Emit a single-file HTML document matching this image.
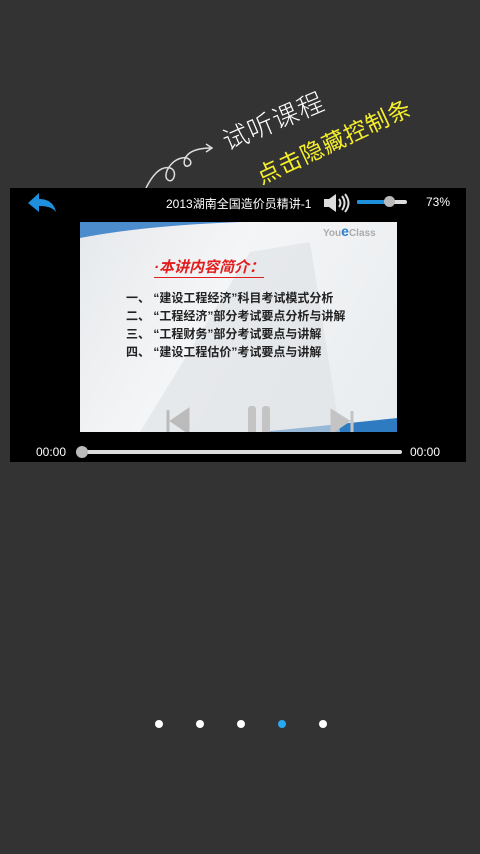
<!DOCTYPE html><html><head><meta charset="utf-8"><style>
body{margin:0;width:480px;height:854px;background:#333333;position:relative;overflow:hidden;font-family:"Liberation Sans","Noto Sans CJK SC",sans-serif}
.a{position:absolute}
</style></head><body>
<div class="a" style="left:216px;top:124px;color:#fff;font-size:26px;transform:rotate(-23deg);transform-origin:left top;font-family:'WenQuanYi Zen Hei','Noto Sans CJK SC',sans-serif;letter-spacing:1px;font-weight:300">试听课程</div>
<div class="a" style="left:250px;top:160px;color:#f4ee2c;font-size:23px;transform:rotate(-25deg);transform-origin:left top;font-family:'WenQuanYi Zen Hei','Noto Sans CJK SC',sans-serif;letter-spacing:1px">点击隐藏控制条</div>
<svg class="a" style="left:140px;top:138px" width="80" height="52"><path d="M6 50 C14 34 22 28 30 30 C38 32 34 46 28 42 C22 38 30 22 42 20 C50 18 54 26 48 28 C42 30 42 16 56 12 C62 10 68 10 72 10 M66 6 L72 10 L66 14" fill="none" stroke="#ddd" stroke-width="1.5"/></svg>
<div class="a" style="left:10px;top:188px;width:456px;height:274px;background:#000"></div>
<svg class="a" style="left:26px;top:192px" width="32" height="22"><path d="M2 11 L13 1 L13 7 C22 7 28 11 30 20 C26 15 20 14 13 14 L13 20 Z" fill="#1e8fdb"/></svg>
<div class="a" style="left:166px;top:195px;color:#fff;font-size:12px">2013湖南全国造价员精讲-1</div>
<svg class="a" style="left:322px;top:192px" width="30" height="22"><path d="M2 7 H7 L14 2 V20 L7 15 H2 Z" fill="#ddd"/><path d="M17 7 Q20 11 17 15 M20 4 Q25 11 20 18 M23 2 Q30 11 23 20" fill="none" stroke="#ddd" stroke-width="2"/></svg>
<div class="a" style="left:357px;top:200px;width:50px;height:4px;background:#ddd;border-radius:2px"></div>
<div class="a" style="left:357px;top:200px;width:33px;height:4px;background:#1e8fdb;border-radius:2px"></div>
<div class="a" style="left:384px;top:196px;width:11px;height:11px;background:#bbb;border-radius:50%"></div>
<div class="a" style="left:426px;top:195px;color:#fff;font-size:12px">73%</div>
<div class="a" style="left:80px;top:222px;width:317px;height:210px;background:linear-gradient(120deg,#e6e9ec,#f4f5f6 40%,#e8ecef);overflow:hidden">
<svg class="a" style="left:0;top:0" width="317" height="210"><path d="M0 0 H160 Q60 4 0 16 Z" fill="#4d8ccc"/><path d="M317 196 Q260 202 180 210 H317 Z" fill="#2f7bc2"/><path d="M170 30 L230 20 L260 210 L60 210 Z" fill="#dde1e4" opacity="0.6"/></svg>
<div class="a" style="left:243px;top:1px;color:#aaa;font-size:10px;font-weight:bold">You<span style="color:#2b7fd0;font-size:14px">e</span>Class</div>
<div class="a" style="left:74px;top:34px;color:#e21d1d;font-size:15px;font-weight:bold;font-style:italic;border-bottom:1px solid #e21d1d">·本讲内容简介：</div>
<div class="a" style="left:46px;top:67px;color:#222;font-size:12px;font-weight:bold;line-height:18px;white-space:pre">一、 “建设工程经济”科目考试模式分析
二、 “工程经济”部分考试要点分析与讲解
三、 “工程财务”部分考试要点与讲解
四、 “建设工程估价”考试要点与讲解</div>
<svg class="a" style="left:86px;top:184px" width="190" height="30"><path d="M2 4 V26 M6 15 L22 4 V26 Z" fill="#bbb" stroke="#bbb" stroke-width="3"/><rect x="82" y="0" width="8" height="30" rx="3" fill="#c4c4c4"/><rect x="96" y="0" width="8" height="30" rx="3" fill="#c4c4c4"/><path d="M166 5 L182 15 L166 26 Z M186 5 V26" fill="#c4c4c4" stroke="#c4c4c4" stroke-width="3"/></svg>
</div>
<div class="a" style="left:36px;top:445px;color:#fff;font-size:12px">00:00</div>
<div class="a" style="left:410px;top:445px;color:#fff;font-size:12px">00:00</div>
<div class="a" style="left:76px;top:450px;width:326px;height:4px;background:#ddd;border-radius:2px"></div>
<div class="a" style="left:76px;top:446px;width:12px;height:12px;background:#bbb;border-radius:50%"></div>
<div class="a" style="left:155px;top:720px;width:8px;height:8px;background:#fff;border-radius:50%"></div>
<div class="a" style="left:196px;top:720px;width:8px;height:8px;background:#fff;border-radius:50%"></div>
<div class="a" style="left:237px;top:720px;width:8px;height:8px;background:#fff;border-radius:50%"></div>
<div class="a" style="left:278px;top:720px;width:8px;height:8px;background:#29a9f3;border-radius:50%"></div>
<div class="a" style="left:319px;top:720px;width:8px;height:8px;background:#fff;border-radius:50%"></div>
</body></html>
